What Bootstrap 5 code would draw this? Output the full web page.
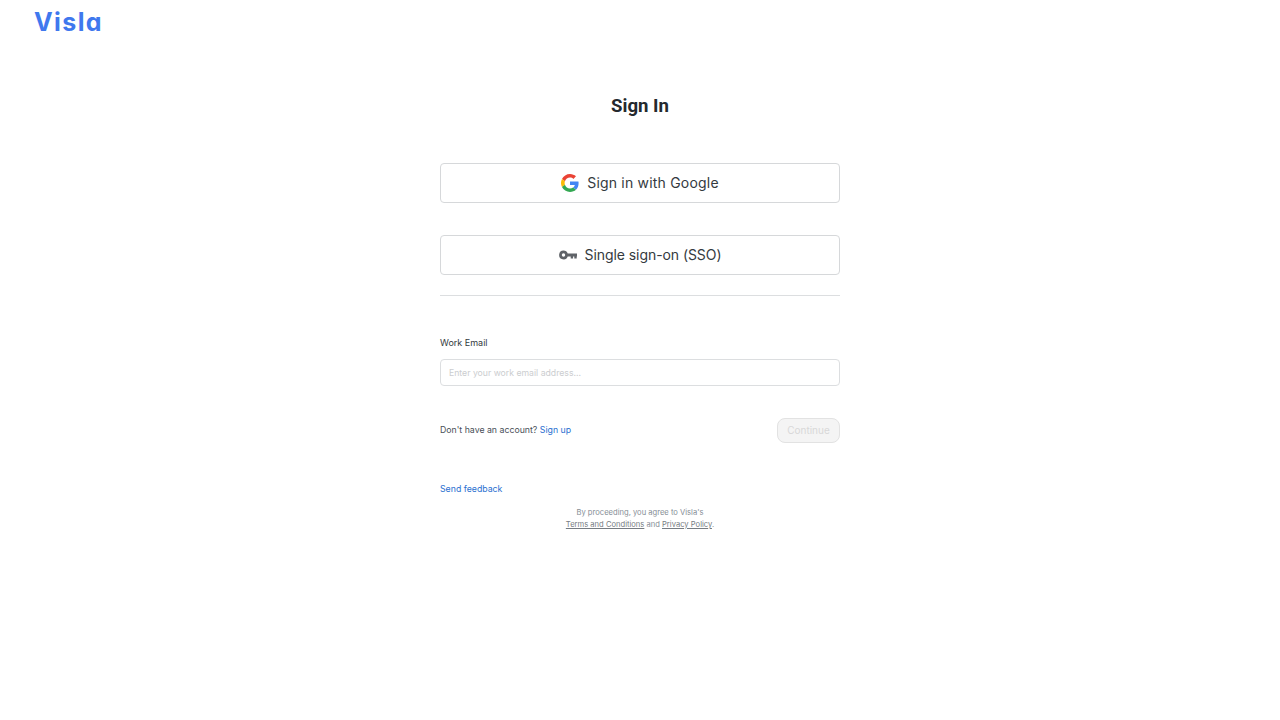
<!DOCTYPE html>
<html lang="en">
<head>
    <meta charset="UTF-8">
    <meta name="viewport" content="width=device-width, initial-scale=1.0">
    <title>Sign In</title>
    <link href="https://cdn.jsdelivr.net/npm/bootstrap@5.3.2/dist/css/bootstrap.min.css" rel="stylesheet">
    <style>
        body { font-family: Inter, "Liberation Sans", sans-serif; background: #fff; color: #343a40; }
        .logo-bar { height: 45px; padding: 6px 0 0 34px; }
        .logo-text { font-family: Inter, sans-serif; font-feature-settings: "cv11" 1; font-weight: 700; font-size: 25px; line-height: 33px; letter-spacing: 1.4px; color: #3f78ee; text-decoration: none; }
        .signin-box { width: 400px; margin: 0 auto; }
        .signin-title { font-family: Roboto, sans-serif; font-weight: 700; font-size: 18.6px; line-height: 22px; color: #24292e; margin: 50px 0 46px; }
        .provider-btn { height: 40px; width: 100%; margin-bottom: 32px; background: #fff; border: 1px solid #d6d8da; border-radius: 4px; font-size: 14px; line-height: 18px; letter-spacing: .2px; color: #343a40; padding: 0 0 1px; }
        .provider-btn:hover { background: #f8f9fa; border-color: #d6d8da; }
        .provider-sso { letter-spacing: -.07px; }
        .split-line { border-top: 1px solid #dcdee0; margin: -12px 0 40px; opacity: 1; }
        .field-label { font-size: 9px; line-height: 14px; color: #343a40; margin-bottom: 9px; display: block; }
        .email-input { height: 27px; font-size: 8.7px; padding: 0 8px; border: 1px solid #dcdee0; border-radius: 4px; }
        .email-input::placeholder { color: #cbcdcf; }
        .account-row { margin-top: 32px; height: 25px; font-size: 8.75px; color: #495057; }
        .blue-link { color: #2a6fd0; text-decoration: none; }
        .continue-btn { width: 63px; height: 25px; padding: 0; font-size: 10px; border-radius: 8px; background: #f4f4f4; border: 1px solid #e2e2e2; color: #d8d8d8; }
        .continue-btn:disabled { background: #f4f4f4; border-color: #e2e2e2; color: #d8d8d8; opacity: 1; }
        .feedback-row { margin-top: 39px; font-size: 8.75px; line-height: 14px; }
        .legal-text { margin-top: 11px; font-size: 7.6px; line-height: 12px; color: #868e96; }
        .legal-text a { color: #767c82; }
    </style>
</head>
<body>
    <div class="logo-bar"><a href="#" class="logo-text">Visla</a></div>

    <main class="signin-box">
        <h1 class="signin-title text-center">Sign In</h1>

        <button type="button" class="btn provider-btn d-flex align-items-center justify-content-center gap-2">
            <svg width="18" height="18" viewBox="0 0 48 48">
                <path fill="#EA4335" d="M24 9.500c3.500 0 6.700 1.300 9.100 3.500l6.800-6.800C35.800 2.400 30.300 0 24 0 14.600 0 6.500 5.400 2.600 13.200l7.900 6.200C12.400 13.700 17.700 9.500 24 9.500z"/>
                <path fill="#4285F4" d="M46.900 24.500c0-1.600-.1-3.100-.4-4.500H24v9h12.900c-.6 3-2.200 5.500-4.700 7.200l7.700 6c4.500-4.200 7-10.300 7-17.700z"/>
                <path fill="#FBBC05" d="M10.500 28.600c-.5-1.400-.8-3-.8-4.600s.3-3.200.8-4.600l-7.900-6.200C.9 16.500 0 20.100 0 24s.9 7.500 2.600 10.800l7.900-6.200z"/>
                <path fill="#34A853" d="M24 48c6.500 0 11.900-2.100 15.900-5.800l-7.700-6c-2.200 1.400-4.900 2.300-8.200 2.300-6.300 0-11.600-4.200-13.500-9.900l-7.900 6.200C6.500 42.600 14.600 48 24 48z"/>
            </svg>
            <span>Sign in with Google</span>
        </button>

        <button type="button" class="btn provider-btn provider-sso d-flex align-items-center justify-content-center gap-2">
            <svg width="18" height="10" viewBox="0 0 18 10">
                <path fill="#5f6368" fill-rule="evenodd" d="M4.500.600a4.400 4.400 0 0 1 4.200 3H18v2.800h-.3v2.200h-2.400V6.400h-1.200v2.200h-2.400V6.400H8.700a4.400 4.400 0 1 1-4.200-5.800zM4.500 3.300a1.700 1.700 0 1 0 0 3.400 1.700 1.700 0 0 0 0-3.400z"/>
            </svg>
            <span>Single sign-on (SSO)</span>
        </button>

        <hr class="split-line">

        <form>
            <label class="field-label" for="workEmail">Work Email</label>
            <input type="email" id="workEmail" class="form-control email-input" placeholder="Enter your work email address...">
            <div class="account-row d-flex justify-content-between align-items-center">
                <span>Don't have an account? <a href="#" class="blue-link">Sign up</a></span>
                <button type="submit" class="btn continue-btn" disabled>Continue</button>
            </div>
        </form>

        <div class="feedback-row"><a href="#" class="blue-link">Send feedback</a></div>
        <p class="legal-text text-center mb-0">By proceeding, you agree to Visla's<br><a href="#">Terms and Conditions</a> and <a href="#">Privacy Policy</a>.</p>
    </main>

    <script src="https://cdn.jsdelivr.net/npm/bootstrap@5.3.2/dist/js/bootstrap.bundle.min.js"></script>
</body>
</html>
